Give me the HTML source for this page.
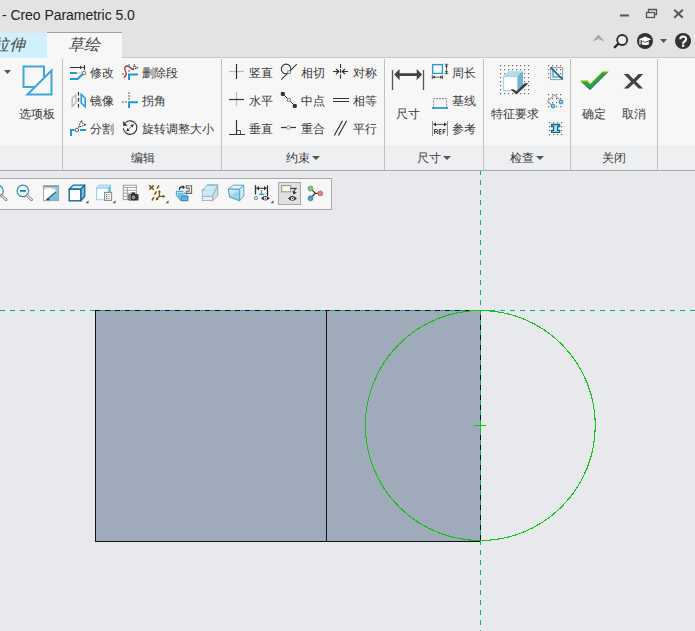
<!DOCTYPE html>
<html><head><meta charset="utf-8">
<style>
html,body{margin:0;padding:0;}
body{width:695px;height:631px;position:relative;overflow:hidden;background:#e8e9ec;font-family:"Liberation Sans",sans-serif;color:#333;}
.a{position:absolute;}
.t{position:absolute;font-size:12px;line-height:14px;white-space:nowrap;color:#3a3a3a;}
.sep{position:absolute;top:59px;width:1px;height:111px;background:#c0c0c0;}
</style></head><body>
<!-- title / tab strip -->
<div class="a" style="left:0;top:0;width:695px;height:58px;background:#e3e3e3"></div>
<div class="a" style="left:2px;top:6px;font-size:14px;line-height:18px;color:#222;white-space:nowrap;letter-spacing:-0.05px">- Creo Parametric 5.0</div>
<!-- tabs -->
<div class="a" style="left:0;top:33px;width:47px;height:25px;background:#d1f0fd"></div>
<div class="a" style="left:47px;top:32px;width:75px;height:26px;background:#f7f7f7;border-top:1px solid #a0a0a0;box-sizing:border-box"></div>
<div class="a" style="left:122px;top:57px;width:573px;height:1px;background:#c6c6c6"></div>
<div class="a" style="left:-7px;top:35px;font-size:16px;line-height:20px;font-style:italic;color:#4a4a4a;white-space:nowrap">拉伸</div>
<div class="a" style="left:68px;top:35px;font-size:16px;line-height:20px;font-style:italic;color:#4a4a4a;white-space:nowrap">草绘</div>
<!-- ribbon -->
<div class="a" style="left:0;top:58px;width:695px;height:87px;background:#f7f7f7"></div>
<div class="a" style="left:0;top:145px;width:695px;height:25px;background:#eeeff1"></div>
<div class="a" style="left:0;top:170px;width:695px;height:1px;background:#a9a9a9"></div>
<div class="sep" style="left:62px"></div>
<div class="sep" style="left:221px"></div>
<div class="sep" style="left:384px"></div>
<div class="sep" style="left:483px"></div>
<div class="sep" style="left:570px"></div>
<div class="sep" style="left:657px"></div>
<!-- toolbar -->
<div class="a" style="left:-2px;top:178px;width:334px;height:32px;background:#f7f7f7;border:1px solid #a8a8a8;box-sizing:border-box"></div>
<div class="a" style="left:278px;top:182px;width:23px;height:23px;background:#e1e1e3;border:1px solid #a9a9a9;box-sizing:border-box"></div>

<!-- ribbon texts -->
<div class="t" style="left:19px;top:107px">选项板</div>
<div class="t" style="left:90px;top:66px">修改</div>
<div class="t" style="left:90px;top:94px">镜像</div>
<div class="t" style="left:90px;top:122px">分割</div>
<div class="t" style="left:142px;top:66px">删除段</div>
<div class="t" style="left:142px;top:94px">拐角</div>
<div class="t" style="left:142px;top:122px">旋转调整大小</div>
<div class="t" style="left:249px;top:66px">竖直</div>
<div class="t" style="left:249px;top:94px">水平</div>
<div class="t" style="left:249px;top:122px">垂直</div>
<div class="t" style="left:301px;top:66px">相切</div>
<div class="t" style="left:301px;top:94px">中点</div>
<div class="t" style="left:301px;top:122px">重合</div>
<div class="t" style="left:353px;top:66px">对称</div>
<div class="t" style="left:353px;top:94px">相等</div>
<div class="t" style="left:353px;top:122px">平行</div>
<div class="t" style="left:396px;top:107px">尺寸</div>
<div class="t" style="left:452px;top:66px">周长</div>
<div class="t" style="left:452px;top:94px">基线</div>
<div class="t" style="left:452px;top:122px">参考</div>
<div class="t" style="left:491px;top:107px">特征要求</div>
<div class="t" style="left:582px;top:107px">确定</div>
<div class="t" style="left:622px;top:107px">取消</div>
<!-- group labels -->
<div class="t" style="left:131px;top:151px">编辑</div>
<div class="t" style="left:286px;top:151px">约束</div>
<div class="t" style="left:417px;top:151px">尺寸</div>
<div class="t" style="left:510px;top:151px">检查</div>
<div class="t" style="left:602px;top:151px">关闭</div>

<svg class="a" style="left:0;top:0" width="695" height="631" viewBox="0 0 695 631">
<!-- group label triangles -->
<g fill="#555">
<path d="M312 156h8l-4 4z"/><path d="M443 156h8l-4 4z"/><path d="M536 156h8l-4 4z"/>
<path d="M4 70h7l-3.5 4z"/>
</g>
<!-- window controls -->
<g stroke="#555" fill="none" stroke-width="1.3">
<path d="M620 15.5h9" stroke-width="2"/>
<rect x="646.5" y="12.5" width="8" height="5"/><path d="M648.5 12.5v-3h8v5h-2"/>
<path d="M674.2 9.7l8.6 8M682.8 9.7L674.2 17.7" stroke-width="1.9"/>
</g>
<path d="M592.8 40.8L598.4 34.6L604.2 40.8H602.2L598.4 39L594.8 40.8Z" fill="#aaa"/>
<circle cx="622.2" cy="40" r="5" fill="#eef4f7" stroke="#2a2a2a" stroke-width="1.8"/>
<path d="M618 44.2l-3.2 3" stroke="#2a2a2a" stroke-width="2.4" stroke-linecap="round"/>
<circle cx="645" cy="41" r="8" fill="#333"/>
<path d="M639 39.3l6.2-2.8 6 2.8-6 2.8z" fill="#fff"/><path d="M641.8 41.2v3q3.4 1.8 7 0v-3l-3.5 1.6z" fill="#fff"/><path d="M640 39.5v5" stroke="#fff" stroke-width="1.2"/>
<path d="M660 39h7l-3.5 4z" fill="#555"/>
<circle cx="683" cy="41" r="8" fill="#333"/>
<path d="M680.3 39.3q0-2.8 2.9-2.8t2.9 2.6q0 1.5-1.6 2.4t-1.4 2.3" fill="none" stroke="#fff" stroke-width="2.1"/><rect x="682" y="44.6" width="2.3" height="2.2" fill="#fff"/>

<!-- palette icon -->
<g fill="none" stroke="#40a7dc" stroke-width="2">
<path d="M44 77.5V66.5H23.5V87H34.5"/>
<path d="M27.5 94.5L51.5 70.5v24z"/>
</g>

<!-- edit group icons -->
<g>
<path d="M70 67.5h14.5M84.5 65v5M80.5 66v3" stroke="#333" stroke-width="1.1" fill="none"/>
<path d="M70 73h6.8" stroke="#1e9ad6" stroke-width="2"/>
<path d="M77.5 73h4" stroke="#999" stroke-width="1.2" stroke-dasharray="1 1"/>
<path d="M70 79h7.6l5.2-5" stroke="#1e9ad6" stroke-width="2" fill="none"/>
<circle cx="84" cy="73" r="1.8" fill="#eee" stroke="#777" stroke-width="1"/>
<!-- mirror -->
<path d="M72.2 97.8L75.8 95V103L72.2 106.6Z" fill="none" stroke="#bdbdbd" stroke-width="1.5"/>
<path d="M78.5 92v16" stroke="#333" stroke-width="1.2" stroke-dasharray="3.4 2.6"/>
<path d="M81.2 94.4L85.2 98.2V106.8L81.2 103Z" fill="none" stroke="#1e9ad6" stroke-width="1.5"/>
<!-- split -->
<path d="M71 136v-6h3.5" stroke="#1e9ad6" stroke-width="2" fill="none"/>
<path d="M80 130h6" stroke="#1e9ad6" stroke-width="2"/>
<circle cx="76.8" cy="130" r="1.8" fill="#eee" stroke="#666" stroke-width="1"/>
<path d="M78.3 127.3L81.6 120.3L82.8 123.8L86 124.6Z" fill="#fff" stroke="#333" stroke-width="1" stroke-dasharray="1.8 0.7"/>
<!-- delete segment -->
<path d="M123.7 77.5C126.5 76 126.8 73.5 125.2 70.5C123.8 67.5 125.5 66 127.5 66C129.5 66 130.5 68.5 132.8 69.6" fill="none" stroke="#a5342a" stroke-width="1.3"/>
<path d="M132.8 69.6L134.4 64.3L135.4 67L138 67.6Z" fill="#fff" stroke="#333" stroke-width="1" stroke-dasharray="1.8 0.7"/>
<path d="M129 80v-5.5h9" fill="none" stroke="#1e9ad6" stroke-width="2"/>
<rect x="128" y="64" width="2" height="2" fill="#aaa"/><rect x="128" y="70" width="2" height="2" fill="#aaa"/><rect x="122" y="73" width="2" height="2" fill="#aaa"/>
<!-- corner -->
<path d="M129 108v-5.7h9" fill="none" stroke="#1e9ad6" stroke-width="2"/>
<g fill="#aaa"><rect x="128" y="92" width="2" height="2"/><rect x="128" y="95" width="2" height="2"/><rect x="128" y="98" width="2" height="2"/><rect x="122" y="101" width="2" height="2"/><rect x="125" y="101" width="2" height="2"/></g>
<!-- rotate resize -->
<path d="M125.4 122.6A6.8 6.8 0 1 1 123.3 128.2" fill="none" stroke="#333" stroke-width="1.15"/>
<path d="M123.1 120.9v4.8h4.6z" fill="#333"/>
<path d="M128 129.8l4-4" stroke="#333" stroke-width="1" stroke-dasharray="1 0.7"/>
<path d="M133.8 124l-3.6 1.2 2.4 2.4zM126.2 131.6l1.2-3.6 2.4 2.4z" fill="#333"/>
</g>

<!-- constraints icons -->
<g stroke-width="1.2" fill="none">
<path d="M229 71.5h15" stroke="#bbb"/><path d="M236.5 64v15" stroke="#333"/>
<path d="M236.5 92v14" stroke="#bbb"/><path d="M229 99.5h15" stroke="#333"/>
<path d="M236.5 120v14M229 134.5h16" stroke="#333"/><path d="M237 130.5h3.5v3.5" stroke="#555" stroke-width="1"/>
<circle cx="286.1" cy="68.9" r="4.8" stroke="#333" stroke-width="1.05"/><path d="M281.2 79.7L296.8 64.1" stroke="#333" stroke-width="1.05"/><rect x="287.8" y="70.8" width="2.6" height="2.6" fill="#eef3f5" stroke="#777" stroke-width="0.8"/>
<path d="M283 94l12 12" stroke="#333" stroke-width="1"/>
<circle cx="282.8" cy="93.9" r="2.2" fill="#333" stroke="none"/><circle cx="294.8" cy="105.9" r="2.2" fill="#333" stroke="none"/>
<rect x="287.5" y="98.4" width="2.8" height="2.8" fill="#eef3f5" stroke="#777" stroke-width="0.8"/>
<path d="M281 127.5h15" stroke="#333"/><circle cx="288.5" cy="127.5" r="1.8" fill="#eef3f5" stroke="#888" stroke-width="0.9"/>
<path d="M340.5 64v15.2" stroke="#333" stroke-dasharray="4 1.2" stroke-width="1.1"/>
<path d="M333 71.5h5M343 71.5h5" stroke="#333"/>
<path d="M336 69l2.8 2.5-2.8 2.5M345 69l-2.8 2.5 2.8 2.5" fill="none" stroke="#333" stroke-width="1.2"/>
<path d="M333 98.5h16M333 101.5h16" stroke="#333" stroke-width="1.1"/>
<path d="M334.3 135.5l8.2-14.8M338.4 135.5l8.2-14.8" stroke="#333" stroke-width="1.2"/>
</g>

<!-- dimension icons -->
<g>
<path d="M392.5 70v20M423.5 70v20" stroke="#555" stroke-width="1.3"/>
<path d="M398 74.6h20" stroke="#444" stroke-width="2.8"/>
<path d="M394.2 74.6l5.4-5.6v11.2zM422.1 74.6l-5.4-5.6v11.2z" fill="#444"/>
<rect x="432.6" y="64.6" width="9.8" height="8.8" fill="none" stroke="#1e9ad6" stroke-width="1.3"/>
<path d="M446.5 64.5v9M444.6 64.3h3.8M444.6 73.7h3.8M432.3 75v4.2M442.6 75v4.2M432.5 77.2h10" stroke="#555" stroke-width="0.9" fill="none"/>
<path d="M446.5 64.5l-1.6 2.3h3.2zM446.5 73.5l-1.6-2.3h3.2zM432.5 77.2l2.3-1.6v3.2zM442.5 77.2l-2.3-1.6v3.2z" fill="#333"/>
<g fill="#999"><rect x="433" y="98" width="2" height="1.1"/><rect x="436" y="98" width="2" height="1.1"/><rect x="439" y="98" width="2" height="1.1"/><rect x="442" y="98" width="2" height="1.1"/><rect x="445" y="98" width="2" height="1.1"/><rect x="433" y="100.5" width="1.1" height="2"/><rect x="446" y="100.5" width="1.1" height="2"/><rect x="433" y="103.5" width="1.1" height="2"/><rect x="446" y="103.5" width="1.1" height="2"/><rect x="433" y="106" width="1.1" height="2"/><rect x="446" y="106" width="1.1" height="2"/></g>
<path d="M432 108h16" stroke="#2a9ad6" stroke-width="1.8"/>
<path d="M432.6 121v15M447.4 121v15" stroke="#777" stroke-width="0.9"/>
<path d="M434 124.4h12" stroke="#444" stroke-width="0.9"/>
<path d="M433.2 124.4l2.8-2.2v4.4zM446.8 124.4l-2.8-2.2v4.4z" fill="#333"/>
<path d="M434.6 134v-4.5h1.9q1.1 0 1.1 1.1t-1.1 1.1h-1.9M436.4 131.7l1.3 2.3M441.5 129.5h-2.4v4.5h2.4M439.1 131.7h2.2M445.6 129.5h-2.4v4.5M443.2 131.7h2" fill="none" stroke="#333" stroke-width="1"/>
</g>

<!-- feature requirements -->
<g fill="#6a6a6a"><rect x="500" y="65" width="1.2" height="1.2"/><rect x="500" y="69" width="1.2" height="1.2"/><rect x="500" y="73" width="1.2" height="1.2"/><rect x="500" y="77" width="1.2" height="1.2"/><rect x="500" y="81" width="1.2" height="1.2"/><rect x="500" y="85" width="1.2" height="1.2"/><rect x="500" y="89" width="1.2" height="1.2"/><rect x="500" y="93" width="1.2" height="1.2"/><rect x="504" y="65" width="1.2" height="1.2"/><rect x="504" y="69" width="1.2" height="1.2"/><rect x="504" y="73" width="1.2" height="1.2"/><rect x="504" y="77" width="1.2" height="1.2"/><rect x="504" y="81" width="1.2" height="1.2"/><rect x="504" y="85" width="1.2" height="1.2"/><rect x="504" y="89" width="1.2" height="1.2"/><rect x="504" y="93" width="1.2" height="1.2"/><rect x="508" y="65" width="1.2" height="1.2"/><rect x="508" y="69" width="1.2" height="1.2"/><rect x="508" y="73" width="1.2" height="1.2"/><rect x="508" y="77" width="1.2" height="1.2"/><rect x="508" y="81" width="1.2" height="1.2"/><rect x="508" y="85" width="1.2" height="1.2"/><rect x="508" y="89" width="1.2" height="1.2"/><rect x="508" y="93" width="1.2" height="1.2"/><rect x="512" y="65" width="1.2" height="1.2"/><rect x="512" y="69" width="1.2" height="1.2"/><rect x="512" y="73" width="1.2" height="1.2"/><rect x="512" y="77" width="1.2" height="1.2"/><rect x="512" y="81" width="1.2" height="1.2"/><rect x="512" y="85" width="1.2" height="1.2"/><rect x="512" y="89" width="1.2" height="1.2"/><rect x="512" y="93" width="1.2" height="1.2"/><rect x="516" y="65" width="1.2" height="1.2"/><rect x="516" y="69" width="1.2" height="1.2"/><rect x="516" y="73" width="1.2" height="1.2"/><rect x="516" y="77" width="1.2" height="1.2"/><rect x="516" y="81" width="1.2" height="1.2"/><rect x="516" y="85" width="1.2" height="1.2"/><rect x="516" y="89" width="1.2" height="1.2"/><rect x="516" y="93" width="1.2" height="1.2"/><rect x="520" y="65" width="1.2" height="1.2"/><rect x="520" y="69" width="1.2" height="1.2"/><rect x="520" y="73" width="1.2" height="1.2"/><rect x="520" y="77" width="1.2" height="1.2"/><rect x="520" y="81" width="1.2" height="1.2"/><rect x="520" y="85" width="1.2" height="1.2"/><rect x="520" y="89" width="1.2" height="1.2"/><rect x="520" y="93" width="1.2" height="1.2"/><rect x="524" y="65" width="1.2" height="1.2"/><rect x="524" y="69" width="1.2" height="1.2"/><rect x="524" y="73" width="1.2" height="1.2"/><rect x="524" y="77" width="1.2" height="1.2"/><rect x="524" y="81" width="1.2" height="1.2"/><rect x="524" y="85" width="1.2" height="1.2"/><rect x="524" y="89" width="1.2" height="1.2"/><rect x="524" y="93" width="1.2" height="1.2"/><rect x="528" y="65" width="1.2" height="1.2"/><rect x="528" y="69" width="1.2" height="1.2"/><rect x="528" y="73" width="1.2" height="1.2"/><rect x="528" y="77" width="1.2" height="1.2"/><rect x="528" y="81" width="1.2" height="1.2"/><rect x="528" y="85" width="1.2" height="1.2"/><rect x="528" y="89" width="1.2" height="1.2"/><rect x="528" y="93" width="1.2" height="1.2"/><rect x="548" y="65" width="1.2" height="1.2"/><rect x="548" y="94" width="1.2" height="1.2"/><rect x="549" y="122" width="1.2" height="1.2"/><rect x="548" y="69" width="1.2" height="1.2"/><rect x="548" y="98" width="1.2" height="1.2"/><rect x="549" y="126" width="1.2" height="1.2"/><rect x="548" y="73" width="1.2" height="1.2"/><rect x="548" y="102" width="1.2" height="1.2"/><rect x="549" y="130" width="1.2" height="1.2"/><rect x="548" y="77" width="1.2" height="1.2"/><rect x="548" y="106" width="1.2" height="1.2"/><rect x="549" y="134" width="1.2" height="1.2"/><rect x="552" y="65" width="1.2" height="1.2"/><rect x="552" y="94" width="1.2" height="1.2"/><rect x="553" y="122" width="1.2" height="1.2"/><rect x="552" y="69" width="1.2" height="1.2"/><rect x="552" y="98" width="1.2" height="1.2"/><rect x="553" y="126" width="1.2" height="1.2"/><rect x="552" y="73" width="1.2" height="1.2"/><rect x="552" y="102" width="1.2" height="1.2"/><rect x="553" y="130" width="1.2" height="1.2"/><rect x="552" y="77" width="1.2" height="1.2"/><rect x="552" y="106" width="1.2" height="1.2"/><rect x="553" y="134" width="1.2" height="1.2"/><rect x="556" y="65" width="1.2" height="1.2"/><rect x="556" y="94" width="1.2" height="1.2"/><rect x="557" y="122" width="1.2" height="1.2"/><rect x="556" y="69" width="1.2" height="1.2"/><rect x="556" y="98" width="1.2" height="1.2"/><rect x="557" y="126" width="1.2" height="1.2"/><rect x="556" y="73" width="1.2" height="1.2"/><rect x="556" y="102" width="1.2" height="1.2"/><rect x="557" y="130" width="1.2" height="1.2"/><rect x="556" y="77" width="1.2" height="1.2"/><rect x="556" y="106" width="1.2" height="1.2"/><rect x="557" y="134" width="1.2" height="1.2"/><rect x="560" y="65" width="1.2" height="1.2"/><rect x="560" y="94" width="1.2" height="1.2"/><rect x="561" y="122" width="1.2" height="1.2"/><rect x="560" y="69" width="1.2" height="1.2"/><rect x="560" y="98" width="1.2" height="1.2"/><rect x="561" y="126" width="1.2" height="1.2"/><rect x="560" y="73" width="1.2" height="1.2"/><rect x="560" y="102" width="1.2" height="1.2"/><rect x="561" y="130" width="1.2" height="1.2"/><rect x="560" y="77" width="1.2" height="1.2"/><rect x="560" y="106" width="1.2" height="1.2"/><rect x="561" y="134" width="1.2" height="1.2"/></g>
<path d="M503.3 76.3l5-5.2h14.7l-5.6 5.2z" fill="#b3ddee"/>
<path d="M517.4 76.3l5.6-5.2v14.2l-5.6 5.5z" fill="#72b2d1"/>
<rect x="503.6" y="76.6" width="13.8" height="14" fill="#fff" stroke="#94d3ec" stroke-width="1"/>
<path d="M510.5 89.2h3l2.8 2.3 8.2-8.2h4l-12.2 11.2z" fill="#3a3a3a"/>
<!-- small right icons -->
<rect x="550.6" y="67.6" width="12" height="12" fill="#f7f7f7" stroke="#999" stroke-width="1"/>
<g fill="#555"><rect x="556" y="69" width="1.2" height="1.2"/><rect x="560" y="69" width="1.2" height="1.2"/><rect x="560" y="73" width="1.2" height="1.2"/></g>
<path d="M553 68.5v8.5h9" fill="none" stroke="#4fbaea" stroke-width="1.7"/>
<path d="M550.5 67.4l12.2 12" stroke="#15668f" stroke-width="1.6"/>
<path d="M551.5 105l-3.8-3.7 6.8-6.5 5.2 5" fill="none" stroke="#aaa" stroke-width="1.2"/>
<circle cx="553" cy="106" r="1.9" fill="#8ad8f5" stroke="#1f86bb" stroke-width="1"/>
<circle cx="561" cy="102" r="1.9" fill="#8ad8f5" stroke="#1f86bb" stroke-width="1"/>
<path d="M551.6 124.5h8v2h-2v3.8h2v2h-8v-2h2v-3.8h-2z" fill="#aee9fb" stroke="#16628a" stroke-width="1.3"/>

<!-- ok / cancel -->
<path d="M580.4 80.6h7.3l2.5 3.1 12.2-12.2h6L590 89.9z" fill="#2e9a5e"/>
<path d="M580.6 80.9h7l2.6 3 12.3-12.1h5.7" fill="none" stroke="#d8f000" stroke-width="1"/>
<path d="M581 81.5l9 8.2 18-18" fill="none" stroke="#0d4d22" stroke-width="0.8" opacity="0.7"/>
<path d="M623.8 74.1H628.4L633.6 79.2L638.6 74.1H643.2L636 81.4L643.2 88.6H638.6L633.6 83.6L628.4 88.6H623.8L631 81.4Z" fill="#444"/>

<!-- toolbar icons -->
<defs>
<linearGradient id="gr1" x1="0" y1="0" x2="1" y2="1"><stop offset="0" stop-color="#bfe6f5"/><stop offset="1" stop-color="#68b5d9"/></linearGradient>
<linearGradient id="gr2" x1="0" y1="0" x2="1" y2="1"><stop offset="0" stop-color="#e2f3fa"/><stop offset="1" stop-color="#8cc8e2"/></linearGradient>
</defs>
<g>
<!-- zoom in (clipped) -->
<circle cx="-2.6" cy="190.9" r="5.8" fill="#eaf6fb" stroke="#3d8fb0" stroke-width="1.2"/>
<path d="M1.6 195.4l4.4 4.4" stroke="#888" stroke-width="2.8" stroke-linecap="round"/><path d="M1.8 195.6l4 4" stroke="#f4f4f4" stroke-width="1.1" stroke-linecap="round"/>
<!-- zoom out -->
<circle cx="22.9" cy="190.9" r="5.8" fill="#eaf6fb" stroke="#3d8fb0" stroke-width="1.2"/>
<path d="M20 190.9h6" stroke="#176d97" stroke-width="1.6"/>
<path d="M27 195.2l4.6 4.6" stroke="#888" stroke-width="2.8" stroke-linecap="round"/><path d="M27.3 195.5l4 4" stroke="#f4f4f4" stroke-width="1.1" stroke-linecap="round"/>
<!-- refit -->
<rect x="43.6" y="185.8" width="15" height="14.8" fill="url(#gr1)" stroke="#a3a3a3" stroke-width="1"/>
<path d="M43.6 186.3h15" stroke="#909090" stroke-width="1.3"/>
<path d="M44.1 200.1V189.6q4-2 8-1.2t4.2 3.4l-8.8 7.6z" fill="#fff"/>
<path d="M47.5 199.2l8.6-7.3" stroke="#11587c" stroke-width="1.5" stroke-dasharray="2 0.5"/>
<ellipse cx="48" cy="199.3" rx="1.8" ry="1.1" fill="#11587c"/>
<!-- cube -->
<path d="M69 189.2l4.2-4.1h11.6l-4 4.1z" fill="#c4f0fb" stroke="#1a6a92" stroke-width="1.3" stroke-linejoin="round"/>
<path d="M80.8 189.2l4-4.1v11.2l-4 4.5z" fill="#7bbcd8" stroke="#1a6a92" stroke-width="1.3" stroke-linejoin="round"/>
<rect x="69.2" y="189.2" width="11.6" height="11.6" fill="#fff" stroke="#1a6a92" stroke-width="1.4"/>
<path d="M85.5 203.2h3v-3z" fill="#555"/>
<!-- views -->
<path d="M96.2 188.1l3.2-3h11.3l-2.4 3z" fill="#c5e8f5" stroke="#8fd0ea" stroke-width="0.9"/>
<path d="M108.3 188.1l2.4-3v7h-2.4z" fill="#5fb6dd"/>
<rect x="96.6" y="188.2" width="11.7" height="11.5" fill="#fff" stroke="#8fd0ea" stroke-width="1"/>
<rect x="104.6" y="192.4" width="7" height="8" fill="#fff" stroke="#8c8c8c" stroke-width="1.1"/>
<path d="M106 194.6h1.2M106 196.6h1.2M106 198.6h1.2" stroke="#444" stroke-width="0.9"/>
<path d="M107.6 194.6h2.6M107.6 196.6h2.6M107.6 198.6h2.6" stroke="#aaa" stroke-width="0.8"/>
<path d="M112.5 203.2h3v-3z" fill="#555"/>
<!-- table camera -->
<rect x="123.3" y="185.3" width="13" height="14.3" fill="#fff" stroke="#9a9a9a" stroke-width="1"/>
<path d="M123.3 187.5h13M123.3 190.3h13M123.3 193.2h13M123.3 196.3h5M127.4 187.5v12" stroke="#9a9a9a" stroke-width="0.9"/>
<path d="M131.5 194v-1.6h3.5v1.6" fill="#333"/>
<rect x="128.4" y="194" width="10.2" height="6.6" rx="1.2" fill="#3b3b3b"/>
<rect x="129.2" y="194.8" width="2" height="5" fill="#9a9a9a"/>
<circle cx="133.5" cy="197.3" r="2.6" fill="#8e8e8e" stroke="#111" stroke-width="0.9"/>
<!-- datum display -->
<g stroke="#7a5618" stroke-width="1.5" fill="none">
<path d="M149.2 185.4l4.6 4.4M153.8 185.4l-4.6 4.4"/>
<path d="M159 185.3l-1.9 3.4M156.4 191.3l-1.9 3.3M153.9 197.2l-2 3.3"/>
<path d="M159.4 192v4.4h5M159.4 196.4l-2.6 2.6" stroke-width="1.3"/>
</g>
<path d="M157.8 192.3l1.6-2.4 1.6 2.4zM162.9 194.8l2.4 1.6-2.4 1.6zM156.2 197.3l-0.5 3 3-0.5z" fill="#7a5618"/>
<path d="M165.5 203.2h3v-3z" fill="#555"/>
<!-- icon 8 -->
<path d="M176.4 191.3h6.6l4.8 5v4.3h-6.8l-4.6-5z" fill="#bfe7f6" stroke="#3a9fd0" stroke-width="1"/>
<path d="M178.6 193.6h3.6l3.6 3.2v3.8h-4.6l-2.6-3z" fill="#8fcbe6" stroke="#3a9fd0" stroke-width="0.8"/>
<rect x="181.2" y="196.3" width="6.6" height="4.3" fill="#6cb4d6" stroke="#2b8fc4" stroke-width="1"/>
<path d="M179.6 190v-1.4q0-1.6 1.6-1.6h2.2" fill="none" stroke="#333" stroke-width="1.3"/>
<path d="M182.6 184.9l2.4 2.3-2.4 2.4z" fill="#333"/>
<path d="M186.3 185.8H191.6V193.4H186.3V191.2H189.2V188.1H186.3Z" fill="none" stroke="#666" stroke-width="1.1"/>
<!-- shaded cube -->
<path d="M202.2 190.2l5-5.1h10.6l-5.2 5.1z" fill="#d6f2fb" stroke="#8fb4c4" stroke-width="0.9"/>
<path d="M212.6 190.2l5.2-5.1v10.4l-5.2 5.1z" fill="#d0e4ec" stroke="#9a9a9a" stroke-width="0.9"/>
<rect x="202.4" y="190.2" width="10.2" height="10.4" fill="#f0eff0" stroke="#a8a8a8" stroke-width="0.9"/>
<path d="M202.4 196.3l4.8-11.2h10.6l-5.2 11.2z" fill="#c8e9f5" opacity="0.9"/>
<path d="M202.4 196.3h10.2l5.2-11.2" fill="none" stroke="#7fb2c8" stroke-width="1"/>
<path d="M207.2 185.1h10.6" stroke="#7aaec6" stroke-width="1.2"/>
<!-- hidden cube -->
<path d="M228.2 189.2l5.2-4h10.4l-4.2 4z" fill="#e4f5fb" stroke="#5aa5c8" stroke-width="1"/>
<path d="M239.6 189.2l4.2-4v10.8l-4.2 4.6z" fill="#d7eef7" stroke="#5aa5c8" stroke-width="1"/>
<path d="M228.2 189.2h11.4v11.4l-9.8-3.6z" fill="url(#gr2)" stroke="#5aa5c8" stroke-width="1.1"/>
<path d="M231 196.5l6-4M233 198l6-4.6" stroke="#7cc0dc" stroke-width="0.9"/>
<!-- sketch display -->
<path d="M255.5 185.2v9.3M267.5 185.2v10.8" stroke="#333" stroke-width="1.3"/>
<path d="M256.5 188.3h10" stroke="#333" stroke-width="1"/>
<path d="M256.2 188.3l2.8-2.2v4.4zM266.8 188.3l-2.8-2.2v4.4z" fill="#333"/>
<path d="M261.5 190.2v4.2M259 194.4h5" stroke="#2a9ad6" stroke-width="1.3"/>
<circle cx="256" cy="198" r="1.7" fill="#ddd" stroke="#888" stroke-width="0.9"/>
<path d="M261 198.3q4.4-4.6 8.8 0q-4.4 4.6-8.8 0z" fill="#3a3a3a"/>
<circle cx="265.4" cy="198.3" r="1.5" fill="#fff"/><circle cx="265.4" cy="198.3" r="0.6" fill="#333"/>
<path d="M270.5 203.2h3v-3z" fill="#555"/>
<!-- pressed icon -->
<rect x="281.6" y="185.6" width="9" height="6.2" fill="#fff8e6" stroke="#999" stroke-width="1.1"/>
<path d="M290.6 188.4h6.2" stroke="#333" stroke-width="1.1"/>
<path d="M295.3 188.6l-1.8 4.4" stroke="#333" stroke-width="1.1"/>
<path d="M292.4 190.8l1 3.6 3.4-1.6z" fill="#333"/>
<path d="M288 198.4q4.4-4.6 8.9 0q-4.4 4.6-8.9 0z" fill="#3a3a3a"/>
<circle cx="292.4" cy="198.4" r="1.5" fill="#fff"/><circle cx="292.4" cy="198.4" r="0.6" fill="#333"/>
<!-- tree -->
<path d="M310.5 188.5l4.7 4.7-4.7 5.1M315.2 193.3h5" stroke="#333" stroke-width="1.2" fill="none"/>
<circle cx="310.5" cy="188.5" r="2.5" fill="#8abf7a" stroke="#5f9a55" stroke-width="0.7"/>
<circle cx="320.3" cy="193.4" r="2.5" fill="#e58080" stroke="#c05a5a" stroke-width="0.7"/>
<circle cx="310.5" cy="198.3" r="2.5" fill="#4f9cc8" stroke="#2f7aa6" stroke-width="0.7"/>
</g>

<!-- sketch -->
<rect x="96" y="311" width="384" height="230" fill="#9fabba"/>
<g shape-rendering="crispEdges">
<path d="M0 310.5H695" stroke="#14a39b" stroke-width="1" stroke-dasharray="5 5"/>
<path d="M480.5 171V631" stroke="#14a39b" stroke-width="1" stroke-dasharray="5 5" stroke-dashoffset="1"/>
<path d="M95 310.5H480" stroke="#111" stroke-width="1" stroke-dasharray="5 5"/>
<path d="M480.5 315V541" stroke="#111" stroke-width="1" stroke-dasharray="5 5"/>
<path d="M95.5 310V542M326.5 310V542M95 541.5H480" stroke="#111" stroke-width="1"/>
<circle cx="480.3" cy="425.5" r="115.0" fill="none" stroke="#14c114" stroke-width="1.1"/>
<path d="M474 425.5h12M480.5 420v12" stroke="#14c114" stroke-width="1"/>
</g>
</svg>
</body></html>
